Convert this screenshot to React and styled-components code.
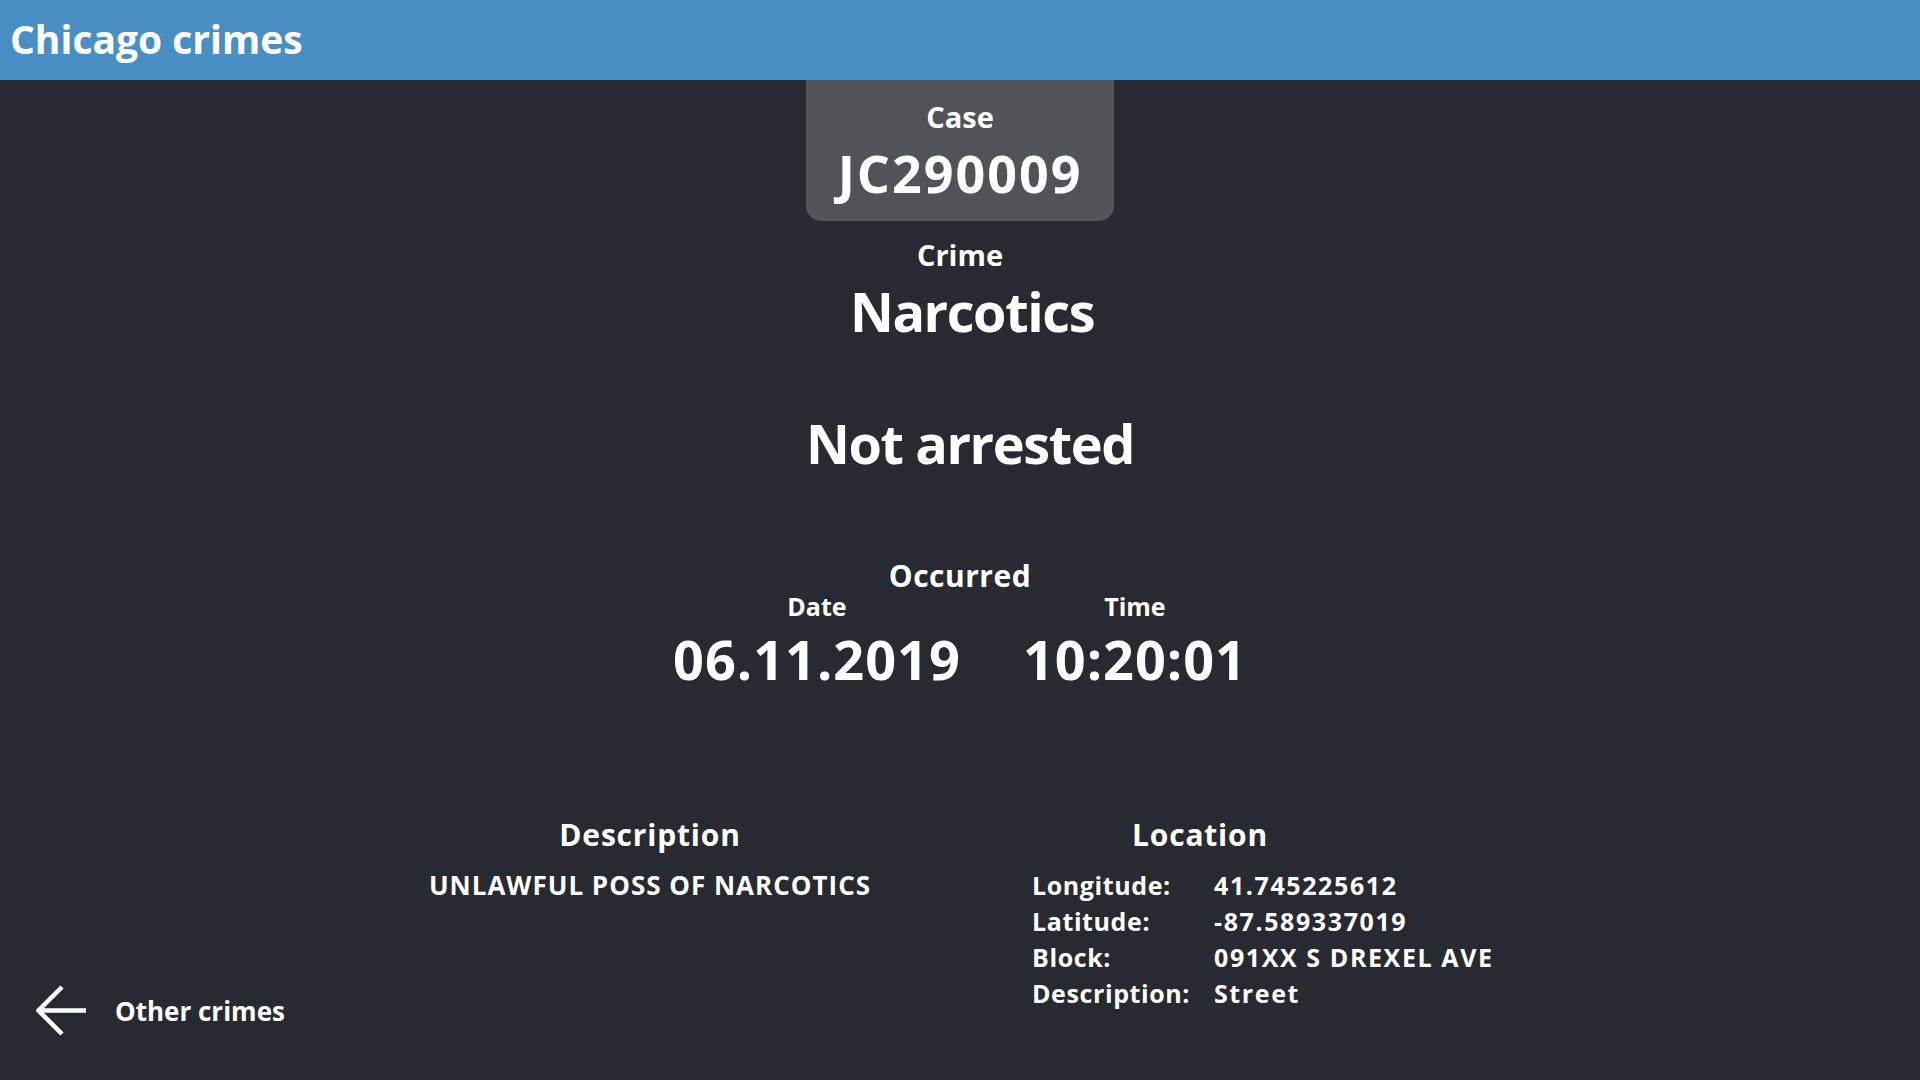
import styled, { createGlobalStyle } from "styled-components";

const crime = {
  caseNumber: "JC290009",
  type: "Narcotics",
  arrested: false,
  date: "06.11.2019",
  time: "10:20:01",
  description: "UNLAWFUL POSS OF NARCOTICS",
  location: [
    ["Longitude:", "41.745225612"],
    ["Latitude:", "-87.589337019"],
    ["Block:", "091XX S DREXEL AVE"],
    ["Description:", "Street"],
  ],
};

const GlobalStyle = createGlobalStyle`
  html, body {
    margin: 0;
    padding: 0;
    background: #272a30;
    color: #ffffff;
    font-family: "Open Sans", Lato, sans-serif;
    font-weight: 700;
  }
`;

const BackArrow = () => (
  <svg width="52" height="51" viewBox="0 0 52 51" fill="none">
    <path
      d="M26 2 L2.5 25.5 L26 49 M2.5 25.5 H50"
      stroke="#ffffff"
      strokeWidth="4.5"
    />
  </svg>
);

const App = () => {
  return (
    <Page>
      <GlobalStyle />
      <Header>
        <Title>Chicago crimes</Title>
      </Header>

      <Main>
        <CaseBox>
          <Label size={29}>Case</Label>
          <CaseNumber>{crime.caseNumber}</CaseNumber>
        </CaseBox>

        <Label size={29} top={19}>Crime</Label>
        <BigValue top={15} shift={24}>{crime.type}</BigValue>

        <BigValue top={78} shift={20}>
          {crime.arrested ? "Arrested" : "Not arrested"}
        </BigValue>

        <Label size={30} top={91} spacing={0.5}>Occurred</Label>
        <Occurred>
          <OccurredCol>
            <Label size={25}>Date</Label>
            <TimeValue>{crime.date}</TimeValue>
          </OccurredCol>
          <OccurredCol>
            <Label size={25}>Time</Label>
            <TimeValue>{crime.time}</TimeValue>
          </OccurredCol>
        </Occurred>

        <Details>
          <BackLink href="#">
            <BackArrow />
            <span>Other crimes</span>
          </BackLink>

          <DetailCol>
            <SectionTitle>Description</SectionTitle>
            <DescriptionText>{crime.description}</DescriptionText>
          </DetailCol>

          <DetailCol>
            <SectionTitle>Location</SectionTitle>
            <LocationTable>
              {crime.location.map(([key, value]) => (
                <LocationRow key={key}>
                  <LocationKey>{key}</LocationKey>
                  <LocationValue>{value}</LocationValue>
                </LocationRow>
              ))}
            </LocationTable>
          </DetailCol>
        </Details>
      </Main>
    </Page>
  );
};

const Page = styled.div`
  min-height: 100vh;
  display: flex;
  flex-direction: column;
`;

const Header = styled.header`
  height: 80px;
  background: #4a8fc4;
  display: flex;
  align-items: center;
  padding: 0 10px 4px;
  box-sizing: border-box;
`;

const Title = styled.h1`
  margin: 0;
  font-size: 39px;
  line-height: 1;
  font-weight: 700;
`;

const Main = styled.main`
  display: flex;
  flex-direction: column;
  align-items: center;
`;

const CaseBox = styled.div`
  width: 308px;
  height: 141px;
  box-sizing: border-box;
  padding-top: 22px;
  background: #505458;
  border-radius: 0 0 15px 15px;
  display: flex;
  flex-direction: column;
  align-items: center;
`;

const Label = styled.div`
  font-size: ${(p) => p.size}px;
  line-height: 1;
  margin-top: ${(p) => p.top || 0}px;
  letter-spacing: ${(p) => p.spacing || 0}px;
`;

const CaseNumber = styled.div`
  font-size: 52px;
  line-height: 1;
  margin-top: 16px;
  letter-spacing: 2px;
`;

const BigValue = styled.div`
  font-size: 54px;
  line-height: 1;
  letter-spacing: -1.4px;
  margin-top: ${(p) => p.top}px;
  padding-left: ${(p) => p.shift || 0}px;
`;

const Occurred = styled.div`
  display: flex;
  gap: 62px;
  margin-top: 3px;
`;

const OccurredCol = styled.div`
  display: flex;
  flex-direction: column;
  align-items: center;
`;

const TimeValue = styled.div`
  font-size: 54px;
  line-height: 1;
  letter-spacing: 1px;
  margin-top: 13px;
`;

const Details = styled.div`
  align-self: stretch;
  display: grid;
  grid-template-columns: 400px 500px 600px;
  margin-top: 134px;
`;

const BackLink = styled.a`
  display: flex;
  align-items: center;
  gap: 27px;
  margin: 165px 0 0 36px;
  align-self: start;
  color: #ffffff;
  text-decoration: none;
  font-size: 26px;
  line-height: 1;
`;

const DetailCol = styled.div`
  display: flex;
  flex-direction: column;
  align-items: center;
`;

const SectionTitle = styled.div`
  font-size: 30px;
  line-height: 1;
  letter-spacing: 0.8px;
`;

const DescriptionText = styled.div`
  font-size: 26px;
  line-height: 1;
  letter-spacing: 1px;
  margin-top: 22px;
`;

const LocationTable = styled.div`
  align-self: flex-start;
  margin: 17px 0 0 132px;
  display: grid;
  grid-template-columns: 182px auto;
`;

const LocationRow = styled.div`
  display: contents;
  font-size: 25px;
  line-height: 36px;
`;

const LocationKey = styled.span`
  letter-spacing: 0.6px;
`;

const LocationValue = styled.span`
  letter-spacing: 1.6px;
`;

export default App;
